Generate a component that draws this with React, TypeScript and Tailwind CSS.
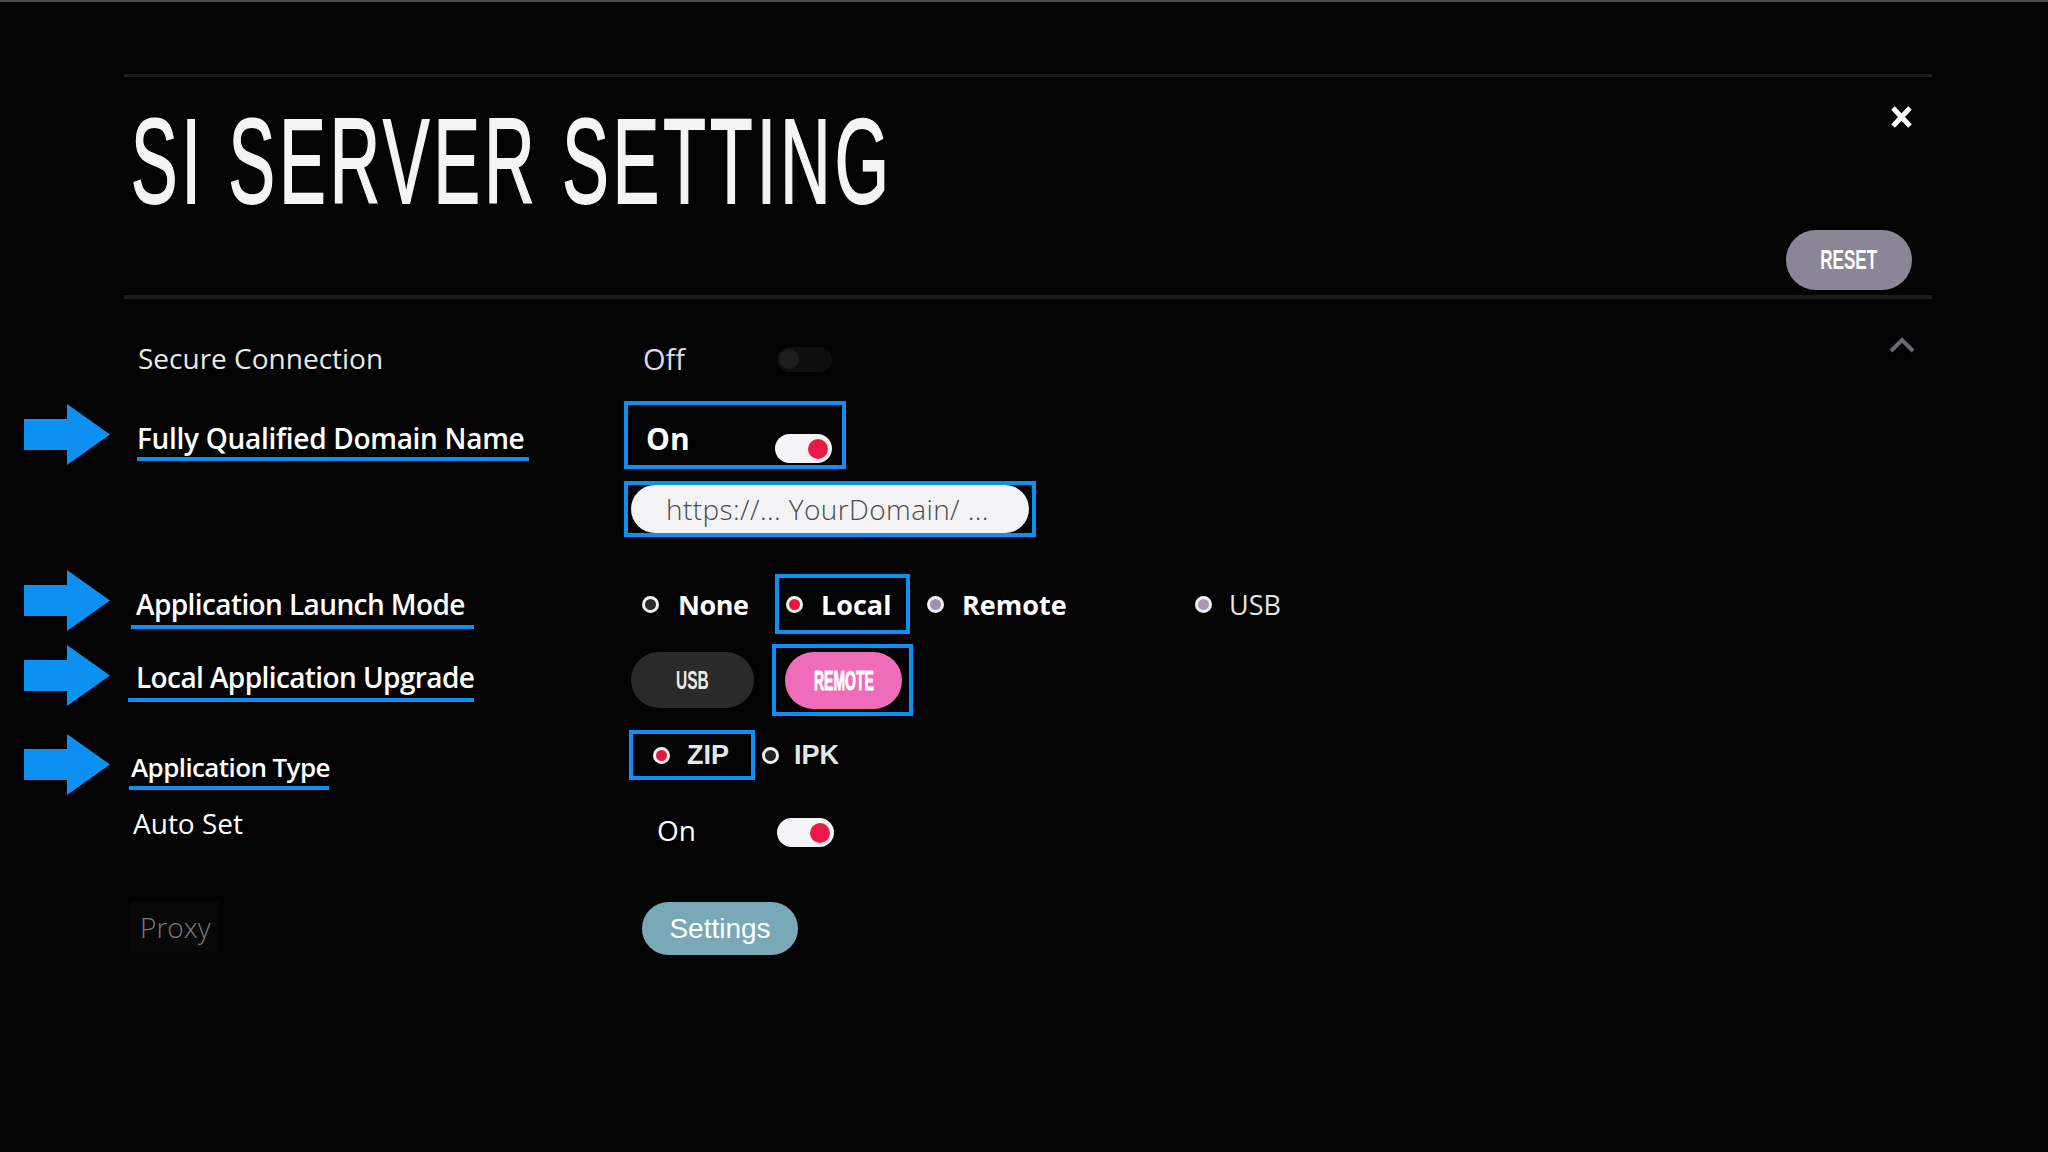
import React from "react";

function Arrow() {
  return (
    <svg width="86" height="61" viewBox="0 0 86 61" className="shrink-0 block">
      <path d="M0 15H43V0L86 30.5L43 61V46H0Z" fill="#0c90f2" />
    </svg>
  );
}

function Toggle({ on }: { on?: boolean }) {
  if (on) {
    return (
      <div className="w-[57px] h-[29px] rounded-full bg-[#f4f4f7] flex items-center justify-end pr-[4px]">
        <div className="w-[20px] h-[20px] rounded-full bg-[#ec1846]" />
      </div>
    );
  }
  return (
    <div className="w-[55px] h-[25px] rounded-full bg-[#0f0f0f] flex items-center pl-[2px]">
      <div className="w-[20px] h-[20px] rounded-full bg-[#1e1e1e]" />
    </div>
  );
}

function Radio({ fill }: { fill: string }) {
  return <div className={"w-[17px] h-[17px] shrink-0 rounded-full border-[3px] border-[#f2f2f2] " + fill} />;
}

export default function App() {
  return (
    <div className="w-[2048px] h-[1152px] bg-[#030303] overflow-hidden relative font-['Open_Sans',sans-serif] text-[#f0f0f0]">
      <div className="h-[2px] bg-[#4a4a4a]" />

      {/* header */}
      <div className="ml-[124px] w-[1808px] mt-[72px] h-[3px] bg-[#1a1a1a]" />
      <div className="ml-[124px] w-[1790px] mt-[24px] flex justify-between items-start">
        <h1 className="ml-[7px] inline-block origin-left scale-x-[0.58] tracking-[0.06em] whitespace-nowrap font-['Liberation_Sans',sans-serif] text-[120px] leading-[120px] text-[#f4f4f4] [-webkit-text-stroke:2px_#f4f4f4]">
          SI SERVER SETTING
        </h1>
        <div className="flex flex-col items-end">
          <svg width="23" height="22" viewBox="0 0 23 22" className="mt-[5px] mr-[1px]">
            <path d="M3 2L20 20M20 2L3 20" stroke="#ffffff" strokeWidth="5" />
          </svg>
          <div className="mt-[102px] mr-[2px] w-[126px] h-[60px] rounded-full bg-[#8a8697] flex items-center justify-center">
            <span className="inline-block scale-x-[0.61] font-['Liberation_Sans',sans-serif] font-bold text-[28px] leading-none text-white">
              RESET
            </span>
          </div>
        </div>
      </div>
      <div className="ml-[124px] w-[1808px] mt-[5px] h-[4px] bg-[#1b1b1b]" />

      {/* scroll indicator */}
      <svg width="26" height="16" viewBox="0 0 26 16" className="absolute left-[1889px] top-[337px]">
        <polyline points="2,14 13,3 24,14" fill="none" stroke="#6b6971" strokeWidth="4" />
      </svg>

      {/* Secure Connection */}
      <div className="mt-[35px] h-[50px] flex items-center">
        <div className="w-[624px] shrink-0 pl-[138px]">
          <span className="text-[28px] leading-[28px] font-medium text-[#e8e8e8]">Secure Connection</span>
        </div>
        <div className="flex items-center">
          <span className="w-[153px] pl-[19px] text-[29px] leading-[28px] text-[#dcdce4]">Off</span>
          <Toggle />
        </div>
      </div>

      {/* Fully Qualified Domain Name */}
      <div className="mt-[17px] h-[68px] flex items-start">
        <div className="w-[624px] shrink-0 flex items-start">
          <div className="ml-[24px] mt-[3px]">
            <Arrow />
          </div>
          <div className="ml-[27px] mt-[23px] flex flex-col">
            <span className="text-[28px] leading-[28px] font-semibold tracking-[-0.3px] text-white whitespace-nowrap">
              Fully Qualified Domain Name
            </span>
            <div className="mt-[5px] h-[4px] w-[392px] bg-[#0c90f2]" />
          </div>
        </div>
        <div className="w-[222px] h-[68px] border-4 border-[#0c90f2] flex items-start">
          <span className="w-[147px] pl-[18px] mt-[19px] text-[30px] leading-[30px] font-bold text-white">On</span>
          <div className="mt-[29px]">
            <Toggle on />
          </div>
        </div>
      </div>

      {/* URL */}
      <div className="mt-[12px] h-[56px] flex">
        <div className="w-[624px] shrink-0" />
        <div className="w-[412px] h-[56px] border-4 border-[#0c90f2] px-[3px]">
          <div className="h-full rounded-full bg-[#f3f3f5] flex items-center pl-[35px]">
            <span className="text-[28px] leading-none font-light tracking-[0.4px] text-[#4a4a4a] whitespace-nowrap">
              https://... YourDomain/ ...
            </span>
          </div>
        </div>
      </div>

      {/* Application Launch Mode */}
      <div className="mt-[33px] h-[64px] flex items-start">
        <div className="w-[624px] shrink-0 flex items-start">
          <div className="ml-[24px]">
            <Arrow />
          </div>
          <div className="ml-[21px] mt-[20px] flex flex-col">
            <span className="pl-[5px] text-[28px] leading-[28px] font-semibold tracking-[-0.6px] text-white whitespace-nowrap">
              Application Launch Mode
            </span>
            <div className="mt-[7px] h-[4px] w-[343px] bg-[#0c90f2]" />
          </div>
        </div>
        <div className="mt-[4px] h-[60px] flex items-center">
          <div className="w-[151px] pl-[18px] flex items-center">
            <Radio fill="bg-[#2a2a2e]" />
            <span className="ml-[19px] text-[27px] leading-none font-bold tracking-[-0.5px] text-white">None</span>
          </div>
          <div className="w-[135px] h-[60px] border-4 border-[#0c90f2] pl-[7px] flex items-center">
            <Radio fill="bg-[#e8173f]" />
            <span className="ml-[18px] text-[27px] leading-none font-bold text-white">Local</span>
          </div>
          <div className="w-[285px] pl-[17px] flex items-center">
            <Radio fill="bg-[#a08fb4]" />
            <span className="ml-[18px] text-[27px] leading-none font-bold text-white">Remote</span>
          </div>
          <div className="flex items-center">
            <Radio fill="bg-[#a797b8]" />
            <span className="ml-[17px] text-[27px] leading-none text-[#e6e6ea]">USB</span>
          </div>
        </div>
      </div>

      {/* Local Application Upgrade */}
      <div className="mt-[10px] h-[72px] flex items-start">
        <div className="w-[624px] shrink-0 flex items-start">
          <div className="ml-[24px] mt-[1px]">
            <Arrow />
          </div>
          <div className="ml-[18px] mt-[19px] flex flex-col">
            <span className="pl-[8px] text-[28px] leading-[28px] font-semibold tracking-[-0.6px] text-white whitespace-nowrap">
              Local Application Upgrade
            </span>
            <div className="mt-[7px] h-[4px] w-[346px] bg-[#0c90f2]" />
          </div>
        </div>
        <div className="flex items-start">
          <div className="ml-[7px] mt-[8px] w-[123px] h-[56px] rounded-full bg-[#2a2a2b] flex items-center justify-center">
            <span className="inline-block scale-x-[0.62] font-['Liberation_Sans',sans-serif] font-bold text-[25px] leading-none text-[#e8e8e8]">
              USB
            </span>
          </div>
          <div className="ml-[18px] w-[141px] h-[72px] border-4 border-[#0c90f2]">
            <div className="ml-[9px] mt-[4px] w-[117px] h-[57px] rounded-full bg-[#ef6cb9] flex items-center justify-center">
              <span className="inline-block scale-x-[0.5] font-['Liberation_Sans',sans-serif] font-bold text-[28px] leading-none text-white [-webkit-text-stroke:1px_#ffffff]">
                REMOTE
              </span>
            </div>
          </div>
        </div>
      </div>

      {/* Application Type */}
      <div className="mt-[14px] h-[64px] flex items-start">
        <div className="w-[624px] shrink-0 flex items-start">
          <div className="ml-[24px] mt-[4px]">
            <Arrow />
          </div>
          <div className="ml-[19px] mt-[23px] flex flex-col">
            <span className="pl-[2px] text-[26px] leading-[28px] font-semibold tracking-[-0.6px] text-white whitespace-nowrap">
              Application Type
            </span>
            <div className="mt-[5px] h-[4px] w-[200px] bg-[#0c90f2]" />
          </div>
        </div>
        <div className="h-[50px] flex items-center">
          <div className="ml-[5px] w-[126px] h-[50px] border-4 border-[#0c90f2] pl-[20px] flex items-center">
            <Radio fill="bg-[#e8173f]" />
            <span className="ml-[17px] font-['Liberation_Sans',sans-serif] font-bold text-[27px] leading-none text-[#e2e8e8]">ZIP</span>
          </div>
          <div className="ml-[7px] flex items-center">
            <Radio fill="bg-[#222226]" />
            <span className="ml-[15px] font-['Liberation_Sans',sans-serif] font-bold text-[27px] leading-none text-[#e2e8e8]">IPK</span>
          </div>
        </div>
      </div>

      {/* Auto Set */}
      <div className="mt-[15px] h-[40px] flex items-start">
        <div className="w-[624px] shrink-0 pl-[133px]">
          <span className="text-[28px] leading-[28px] text-white">Auto Set</span>
        </div>
        <div className="flex items-start">
          <span className="w-[153px] pl-[33px] mt-[7px] text-[28px] leading-[28px] text-white">On</span>
          <div className="mt-[9px]">
            <Toggle on />
          </div>
        </div>
      </div>

      {/* Proxy */}
      <div className="mt-[53px] h-[53px] flex items-center">
        <div className="w-[624px] shrink-0 pl-[131px]">
          <span className="px-[9px] py-[6px] bg-[#080808] text-[28px] leading-[28px] font-light text-[#7a7a7a]">Proxy</span>
        </div>
        <div className="ml-[18px] w-[156px] h-[53px] rounded-full bg-[#79a8b7] flex items-center justify-center">
          <span className="font-['Liberation_Sans',sans-serif] text-[28px] leading-none text-white">Settings</span>
        </div>
      </div>
    </div>
  );
}
